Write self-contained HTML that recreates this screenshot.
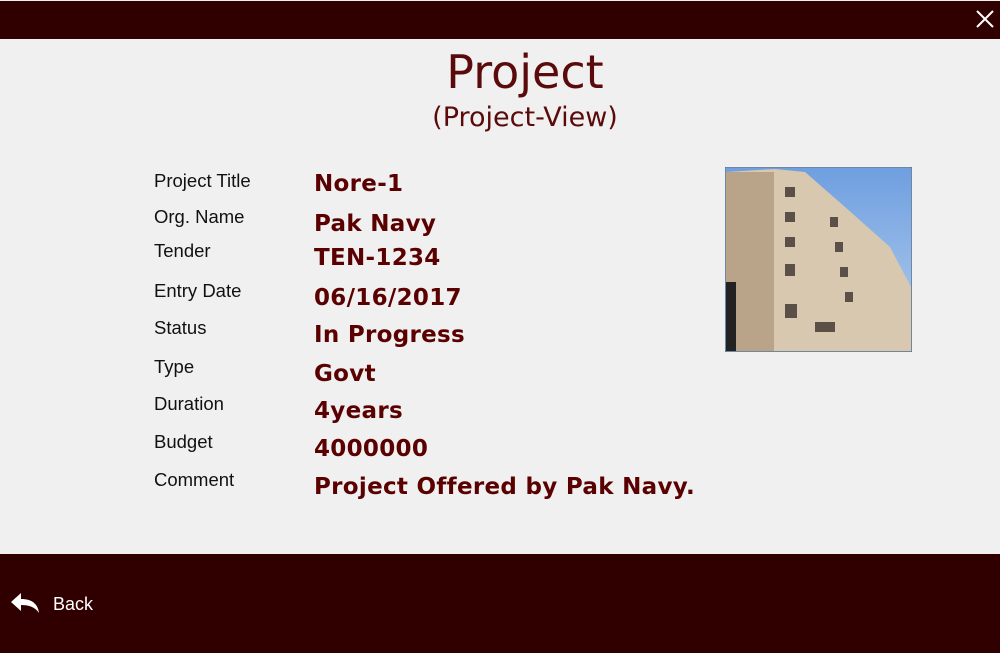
<!DOCTYPE html>
<html><head><style>
body{margin:0;width:1000px;height:653px;background:#f0f0f0;position:relative;overflow:hidden;font-family:"Liberation Sans",sans-serif}
.top{position:absolute;left:0;top:1px;width:1000px;height:38px;background:#300000}
.bot{position:absolute;left:0;top:554px;width:1000px;height:99px;background:#300000}
.t{position:absolute;color:#5a0a0a;font-family:"DejaVu Sans",sans-serif;text-align:center;width:1000px;left:25px}
.l{position:absolute;left:154px;font-size:18.5px;color:#111}
.v{position:absolute;left:314px;font-size:23px;font-weight:bold;color:#5a0000;font-family:"DejaVu Sans",sans-serif;letter-spacing:0.3px}
</style></head><body>
<div class="top"></div>
<svg style="position:absolute;left:975px;top:9px" width="20" height="20"><path d="M2 2L18 18M18 2L2 18" stroke="#fff" stroke-width="2"/></svg>
<div class="t" style="top:45px;font-size:46px">Project</div>
<div class="t" style="top:102px;font-size:27px">(Project-View)</div>
<div class="l" style="top:170px">Project Title</div>
<div class="l" style="top:206px">Org. Name</div>
<div class="l" style="top:240px">Tender</div>
<div class="l" style="top:280px">Entry Date</div>
<div class="l" style="top:317px">Status</div>
<div class="l" style="top:356px">Type</div>
<div class="l" style="top:393px">Duration</div>
<div class="l" style="top:431px">Budget</div>
<div class="l" style="top:469px">Comment</div>
<div class="v" style="top:171px">Nore-1</div>
<div class="v" style="top:211px">Pak Navy</div>
<div class="v" style="top:245px">TEN-1234</div>
<div class="v" style="top:285px">06/16/2017</div>
<div class="v" style="top:322px">In Progress</div>
<div class="v" style="top:361px">Govt</div>
<div class="v" style="top:398px">4years</div>
<div class="v" style="top:436px">4000000</div>
<div class="v" style="top:474px">Project Offered by Pak Navy.</div>
<svg style="position:absolute;left:725px;top:167px" width="187" height="185">
<rect width="187" height="185" fill="#7aa8e0" stroke="#666"/>
<rect x="1" y="1" width="185" height="183" fill="url(#sky)"/>
<defs><linearGradient id="sky" x1="0" y1="0" x2="0" y2="1"><stop offset="0" stop-color="#6f9fe0"/><stop offset="1" stop-color="#b5d0ee"/></linearGradient></defs>
<polygon points="1,5 50,2 80,5 120,40 165,80 186,120 186,184 1,184" fill="#d8c8b0"/>
<rect x="1" y="5" width="48" height="179" fill="#b9a48a"/>
<rect x="1" y="115" width="10" height="69" fill="#222"/>
<g fill="#5a5048"><rect x="60" y="20" width="10" height="10"/><rect x="60" y="45" width="10" height="10"/><rect x="60" y="70" width="10" height="10"/><rect x="60" y="97" width="10" height="12"/><rect x="60" y="137" width="12" height="14"/><rect x="105" y="50" width="8" height="10"/><rect x="110" y="75" width="8" height="10"/><rect x="115" y="100" width="8" height="10"/><rect x="120" y="125" width="8" height="10"/><rect x="90" y="155" width="20" height="10"/></g>
</svg>
<div class="bot"></div>
<svg style="position:absolute;left:9px;top:591px" width="32" height="24"><path d="M12 2L2 11L12 20V14C20 14 26 16 30 22C29 13 23 8 12 8Z" fill="#fff"/></svg>
<div style="position:absolute;left:53px;top:594px;color:#fff;font-size:18px">Back</div>
</body></html>
